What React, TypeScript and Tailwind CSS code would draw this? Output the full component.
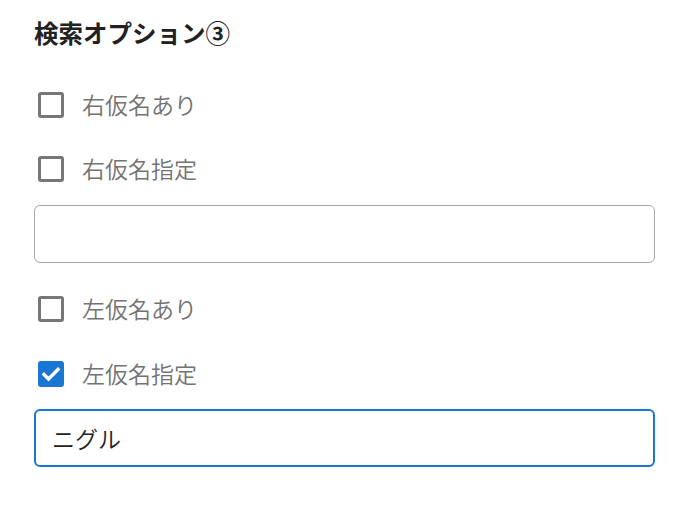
import React from 'react';

const font = { fontFamily: '"Noto Sans CJK JP", "Noto Sans", sans-serif' };

function Check({ label, checked }: { label: string; checked?: boolean }) {
  return (
    <label className="flex items-center h-[48px] cursor-pointer">
      <span className="w-[44px] flex justify-start pl-[4px]">
        {checked ? (
          <span className="w-[26px] h-[26px] rounded-[3px] bg-[#1976d2] flex items-center justify-center">
            <svg viewBox="0 0 24 24" className="w-[24px] h-[24px]" fill="none" stroke="white" strokeWidth="3.4" strokeLinecap="square">
              <path d="M5 12.5l4.5 4.5L19 7.5" />
            </svg>
          </span>
        ) : (
          <span className="w-[26px] h-[26px] rounded-[3px] border-[3px] border-[#777777]" />
        )}
      </span>
      <span className="text-[23px] font-[350] leading-none text-[#737373] ml-[4px] -mt-[2px]">{label}</span>
    </label>
  );
}

export default function App() {
  return (
    <div className="w-[673px] h-[505px] bg-white" style={font}>
      <div className="pl-[34px] pr-[18px] pt-[16px]">
        <h2 className="h-[34px] flex items-center text-[24.5px] font-bold text-[#222222]">検索オプション③</h2>
        <div className="mt-[31px]">
          <Check label="右仮名あり" />
        </div>
        <div className="mt-[16px]">
          <Check label="右仮名指定" />
        </div>
        <input
          type="text"
          className="mt-[12px] block w-full h-[58px] rounded-[6px] border border-[#a8a8a8] px-[16px] text-[23px] text-[#222] outline-none"
        />
        <div className="mt-[22px]">
          <Check label="左仮名あり" />
        </div>
        <div className="mt-[17px]">
          <Check label="左仮名指定" checked />
        </div>
        <input
          type="text"
          defaultValue="ニグル"
          className="mt-[11px] block w-full h-[58px] rounded-[6px] border-2 border-[#1976d2] px-[16px] text-[23px] font-[350] text-[#222] outline-none"
        />
      </div>
    </div>
  );
}
